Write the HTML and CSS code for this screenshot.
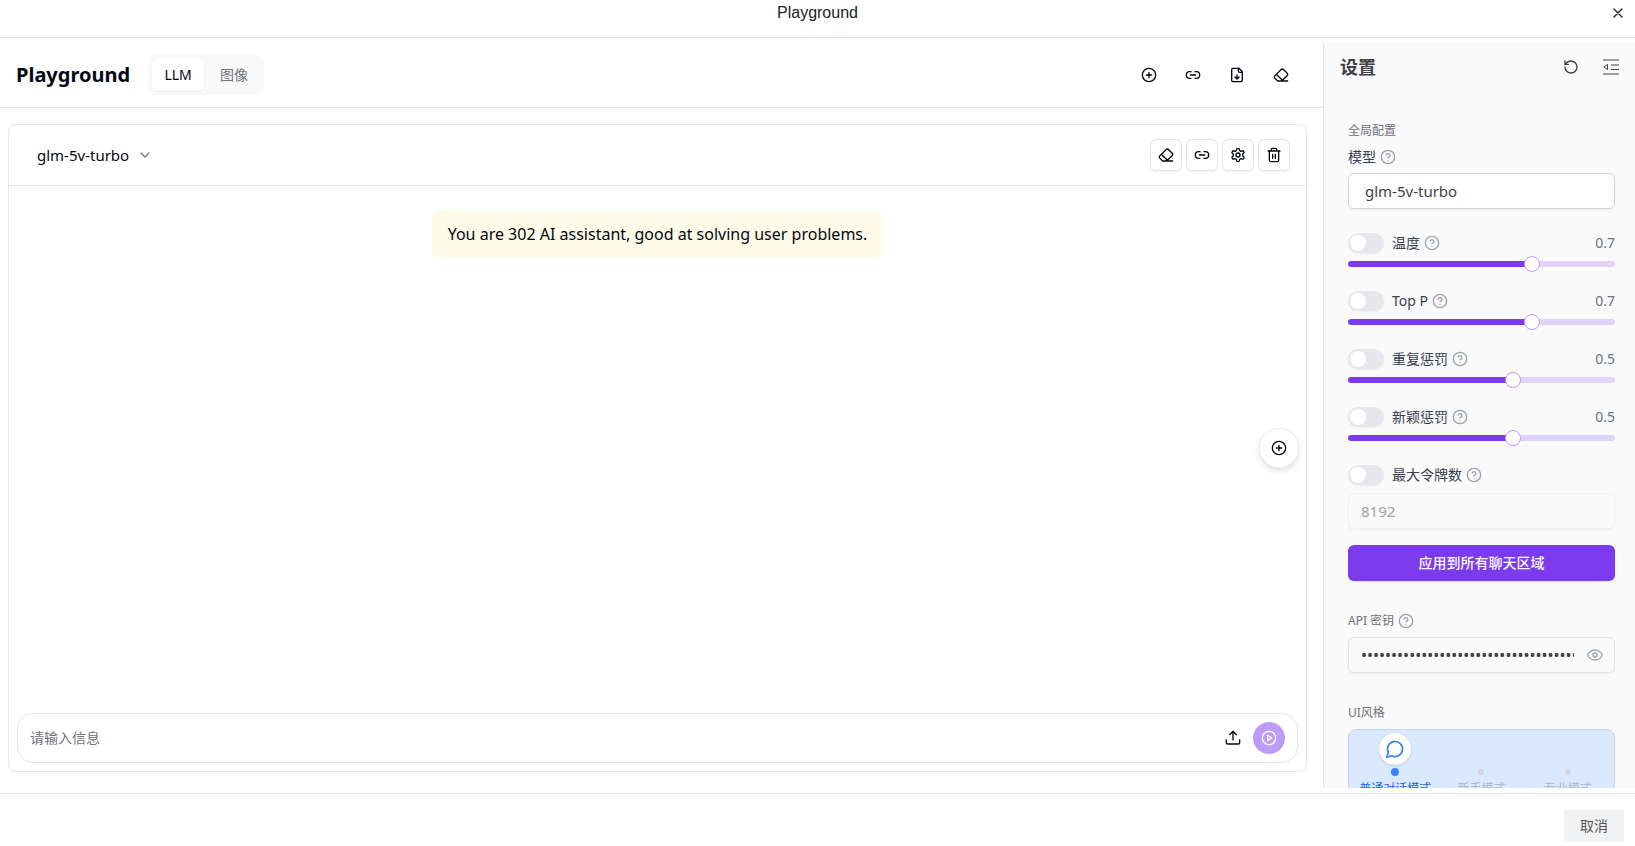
FILE: index.html
```
<!DOCTYPE html>
<html lang="zh-CN">
<head>
    <meta charset="UTF-8">
    <meta name="viewport" content="width=device-width, initial-scale=1.0">
    <title>Playground</title>
    <link rel="stylesheet" href="styles.css">
</head>
<body>
    <!-- shared icons -->
    <svg class="sprite" aria-hidden="true">
        <symbol id="plus" viewBox="0 0 24 24"><circle cx="12" cy="12" r="10"/><path d="M8 12h8M12 8v8"/></symbol>
        <symbol id="link" viewBox="0 0 24 24"><path d="M9 17H7A5 5 0 0 1 7 7h2M15 7h2a5 5 0 1 1 0 10h-2M8 12h8"/></symbol>
        <symbol id="file" viewBox="0 0 24 24"><path d="M15 2H6a2 2 0 0 0-2 2v16a2 2 0 0 0 2 2h12a2 2 0 0 0 2-2V7Z"/><path d="M14 2v4a2 2 0 0 0 2 2h4M12 18v-6M9 15l3 3 3-3"/></symbol>
        <symbol id="eraser" viewBox="0 0 24 24"><path d="m7 21-4.3-4.3c-1-1-1-2.5 0-3.4l9.6-9.6c1-1 2.5-1 3.4 0l5.6 5.6c1 1 1 2.5 0 3.4L13 21M22 21H7M5 11l9 9"/></symbol>
        <symbol id="gear" viewBox="0 0 24 24"><path d="M12.22 2h-.44a2 2 0 0 0-2 2v.18a2 2 0 0 1-1 1.73l-.43.25a2 2 0 0 1-2 0l-.15-.08a2 2 0 0 0-2.73.73l-.22.38a2 2 0 0 0 .73 2.73l.15.1a2 2 0 0 1 1 1.72v.51a2 2 0 0 1-1 1.74l-.15.09a2 2 0 0 0-.73 2.73l.22.38a2 2 0 0 0 2.73.73l.15-.08a2 2 0 0 1 2 0l.43.25a2 2 0 0 1 1 1.73V20a2 2 0 0 0 2 2h.44a2 2 0 0 0 2-2v-.18a2 2 0 0 1 1-1.73l.43-.25a2 2 0 0 1 2 0l.15.08a2 2 0 0 0 2.73-.73l.22-.39a2 2 0 0 0-.73-2.73l-.15-.08a2 2 0 0 1-1-1.74v-.5a2 2 0 0 1 1-1.74l.15-.09a2 2 0 0 0 .73-2.73l-.22-.38a2 2 0 0 0-2.73-.73l-.15.08a2 2 0 0 1-2 0l-.43-.25a2 2 0 0 1-1-1.73V4a2 2 0 0 0-2-2z"/><circle cx="12" cy="12" r="3"/></symbol>
        <symbol id="trash" viewBox="0 0 24 24"><path d="M3 6h18M19 6v14c0 1-1 2-2 2H7c-1 0-2-1-2-2V6M8 6V4c0-1 1-2 2-2h4c1 0 2 1 2 2v2M10 11v6M14 11v6"/></symbol>
        <symbol id="help" viewBox="0 0 24 24"><circle cx="12" cy="12" r="10"/><path d="M9.09 9a3 3 0 0 1 5.83 1c0 2-3 3-3 3M12 17h.01"/></symbol>
        <symbol id="reset" viewBox="0 0 24 24"><path d="M3 12a9 9 0 1 0 9-9 9.75 9.75 0 0 0-6.74 2.74L3 8"/><path d="M3 3v5h5"/></symbol>
        <symbol id="upload" viewBox="0 0 24 24"><path d="M2 15v4a2 2 0 0 0 2 2h16a2 2 0 0 0 2-2v-4M17 7l-5-5-5 5M12 2v13"/></symbol>
        <symbol id="play" viewBox="0 0 24 24"><circle cx="12" cy="12" r="10"/><path d="m10 8 6 4-6 4z"/></symbol>
        <symbol id="eye" viewBox="0 0 24 24"><path d="M1 12s3-7.500 11-7.500S23 12 23 12s-3 7.500-11 7.500S1 12 1 12z"/><circle cx="12" cy="12" r="3"/></symbol>
        <symbol id="chat" viewBox="0 0 24 24"><path d="M7.900 20A9 9 0 1 0 4 16.100L2 22Z"/></symbol>
    </svg>

    <header class="modal-header">
        <span class="modal-title">Playground</span>
        <button class="close" aria-label="Close"><svg viewBox="0 0 10 10"><path d="m1 1 8 8M9 1 1 9"/></svg></button>
    </header>

    <div class="modal-body">
        <main class="main">
            <div class="topbar">
                <h1>Playground</h1>
                <div class="tabs" role="tablist">
                    <button class="tab active" role="tab" aria-selected="true">LLM</button>
                    <button class="tab" role="tab" aria-selected="false">图像</button>
                </div>
                <div class="topbar-actions">
                    <button class="icon-btn" aria-label="添加"><svg class="icon"><use href="#plus"/></svg></button>
                    <button class="icon-btn" aria-label="同步"><svg class="icon"><use href="#link"/></svg></button>
                    <button class="icon-btn" aria-label="导出"><svg class="icon"><use href="#file"/></svg></button>
                    <button class="icon-btn" aria-label="清空"><svg class="icon"><use href="#eraser"/></svg></button>
                </div>
            </div>

            <section class="panel">
                <div class="panel-header">
                    <div class="model-picker">
                        <select aria-label="模型">
                            <option>glm-5v-turbo</option>
                        </select>
                        <svg class="chevron" viewBox="0 0 10 6"><path d="m1 1 4 4 4-4"/></svg>
                    </div>
                    <div class="panel-actions">
                        <button class="box-btn" aria-label="清空"><svg class="icon"><use href="#eraser"/></svg></button>
                        <button class="box-btn" aria-label="同步"><svg class="icon"><use href="#link"/></svg></button>
                        <button class="box-btn" aria-label="设置"><svg class="icon"><use href="#gear"/></svg></button>
                        <button class="box-btn" aria-label="删除"><svg class="icon"><use href="#trash"/></svg></button>
                    </div>
                </div>
                <div class="messages">
                    <p class="bubble">You are 302 AI assistant, good at solving user problems.</p>
                </div>
                <form class="composer">
                    <input type="text" placeholder="请输入信息" aria-label="请输入信息">
                    <button type="button" class="upload" aria-label="上传"><svg class="icon"><use href="#upload"/></svg></button>
                    <button type="button" class="send" aria-label="发送"><svg class="icon"><use href="#play"/></svg></button>
                </form>
                <button class="float-btn" aria-label="添加"><svg class="icon"><use href="#plus"/></svg></button>
            </section>
        </main>

        <aside class="sidebar">
            <div class="sidebar-header">
                <h2>设置</h2>
                <button class="plain-btn" aria-label="重置"><svg class="icon"><use href="#reset"/></svg></button>
                <button class="plain-btn" aria-label="收起"><svg class="fold" viewBox="0 0 16 16"><path d="M0 1h16M8 6h8M8 10.500h8M0 15h16M4.500 5.500v5L.8 8z"/></svg></button>
            </div>

            <div class="settings">
                <h3>全局配置</h3>
                <div class="label-row field-label">
                    <label for="model">模型</label>
                    <svg class="icon help"><use href="#help"/></svg>
                </div>
                <select id="model" class="field model">
                    <option>glm-5v-turbo</option>
                </select>

                <div class="param">
                    <div class="label-row">
                        <input type="checkbox" class="switch" id="temperature">
                        <label for="temperature">温度</label>
                        <svg class="icon help"><use href="#help"/></svg>
                        <output>0.7</output>
                    </div>
                    <input type="range" min="0" max="1" step="0.1" value="0.7" aria-label="温度" style="--fill: 70%">
                </div>
                <div class="param">
                    <div class="label-row">
                        <input type="checkbox" class="switch" id="top-p">
                        <label for="top-p">Top P</label>
                        <svg class="icon help"><use href="#help"/></svg>
                        <output>0.7</output>
                    </div>
                    <input type="range" min="0" max="1" step="0.1" value="0.7" aria-label="Top P" style="--fill: 70%">
                </div>
                <div class="param">
                    <div class="label-row">
                        <input type="checkbox" class="switch" id="frequency">
                        <label for="frequency">重复惩罚</label>
                        <svg class="icon help"><use href="#help"/></svg>
                        <output>0.5</output>
                    </div>
                    <input type="range" min="-2" max="2" step="0.1" value="0.5" aria-label="重复惩罚" style="--fill: 62.5%">
                </div>
                <div class="param">
                    <div class="label-row">
                        <input type="checkbox" class="switch" id="presence">
                        <label for="presence">新颖惩罚</label>
                        <svg class="icon help"><use href="#help"/></svg>
                        <output>0.5</output>
                    </div>
                    <input type="range" min="-2" max="2" step="0.1" value="0.5" aria-label="新颖惩罚" style="--fill: 62.5%">
                </div>

                <div class="label-row">
                    <input type="checkbox" class="switch" id="max-tokens">
                    <label for="max-tokens">最大令牌数</label>
                    <svg class="icon help"><use href="#help"/></svg>
                </div>
                <input type="text" class="field tokens" value="8192" aria-label="最大令牌数" disabled>
                <button class="apply">应用到所有聊天区域</button>

                <div class="label-row small-label">
                    <label for="api-key">API 密钥</label>
                    <svg class="icon help"><use href="#help"/></svg>
                </div>
                <div class="field key">
                    <input type="password" id="api-key" value="sk-0000000000000000000000000000000000000000000000000">
                    <button class="plain-btn" aria-label="显示"><svg class="icon help"><use href="#eye"/></svg></button>
                </div>

                <h3 class="style-title">UI风格</h3>
                <div class="modes">
                    <label class="mode">
                        <span class="mode-icon"><svg class="icon"><use href="#chat"/></svg></span>
                        <input type="radio" name="mode" checked>
                        <span>普通对话模式</span>
                    </label>
                    <label class="mode">
                        <input type="radio" name="mode">
                        <span>新手模式</span>
                    </label>
                    <label class="mode">
                        <input type="radio" name="mode">
                        <span>专业模式</span>
                    </label>
                </div>
            </div>
        </aside>
    </div>

    <footer class="modal-footer">
        <button class="cancel">取消</button>
    </footer>
</body>
</html>
```
FILE: styles.css
```
* {
    box-sizing: border-box;
}
body {
    display: flex;
    flex-direction: column;
    height: 100vh;
    margin: 0;
    overflow: hidden;
    font-family: "Noto Sans", "Noto Sans CJK SC", sans-serif;
    font-size: 14px;
    line-height: 20px;
    color: #030712;
    background-color: #ffffff;
}
h1, h2, h3, p {
    margin: 0;
}
button, input, select {
    margin: 0;
    padding: 0;
    border: none;
    background: none;
    font: inherit;
    color: inherit;
}
button {
    display: flex;
    align-items: center;
    justify-content: center;
    cursor: pointer;
}
select {
    appearance: none;
    font-size: 15px;
}
input:focus, select:focus {
    outline: none;
}
svg {
    display: block;
    flex-shrink: 0;
    fill: none;
    stroke: currentColor;
    stroke-width: 2;
    stroke-linecap: round;
    stroke-linejoin: round;
}
.sprite {
    position: absolute;
    width: 0;
    height: 0;
}
.icon {
    width: 16px;
    height: 16px;
}

/* modal frame */
.modal-header {
    display: grid;
    grid-template-columns: 1fr auto 1fr;
    height: 38px;
    padding: 3px 12px 0;
    border-bottom: 1px solid #e5e5e5;
}
.modal-title {
    grid-column: 2;
    font-family: "Liberation Sans", Arial, sans-serif;
    font-size: 16px;
    color: #222222;
}
.close {
    justify-self: end;
    width: 10px;
    height: 20px;
    color: #222222;
}
.close svg {
    width: 10px;
    height: 10px;
    stroke-width: 1.4;
}
.modal-body {
    display: flex;
    flex: 1;
    min-height: 0;
    padding: 5px 0;
}
.modal-footer {
    display: flex;
    justify-content: flex-end;
    padding: 16px 11px 4px;
    border-top: 1px solid #e5e5e5;
}
.cancel {
    width: 60px;
    height: 32px;
    border-radius: 2px;
    background-color: #f1f2f4;
    color: #555555;
}

/* chat area */
.main {
    display: flex;
    flex-direction: column;
    flex: 1;
    min-width: 0;
}
.topbar {
    display: flex;
    align-items: center;
    height: 65px;
    padding: 0 24px 0 16px;
    border-bottom: 1px solid #e5e5e8;
}
h1 {
    font-size: 20px;
    line-height: 28px;
    font-weight: 700;
}
.tabs {
    display: flex;
    gap: 4px;
    margin-left: 18px;
    padding: 4px;
    border-radius: 8px;
    background-color: #f9f9f9;
}
.tab {
    min-width: 52px;
    height: 32px;
    border-radius: 6px;
    color: #71717a;
}
.tab.active {
    background-color: #ffffff;
    color: #030712;
    box-shadow: 0 1px 2px rgba(0, 0, 0, 0.06);
}
.topbar-actions {
    display: flex;
    gap: 8px;
    margin-left: auto;
}
.icon-btn {
    width: 36px;
    height: 36px;
}
.panel {
    position: relative;
    display: flex;
    flex-direction: column;
    flex: 1;
    min-height: 0;
    margin: 16px 16px 16px 8px;
    border: 1px solid #e5e5e8;
    border-radius: 8px;
}
.panel-header {
    display: flex;
    align-items: center;
    justify-content: space-between;
    height: 61px;
    padding: 0 16px 0 28px;
    border-bottom: 1px solid #e5e5e8;
}
.model-picker {
    display: flex;
    align-items: center;
    gap: 10px;
}
.chevron {
    width: 10px;
    height: 6px;
    color: #777777;
    stroke-width: 1.3;
}
.panel-actions {
    display: flex;
    gap: 4px;
}
.box-btn {
    width: 32px;
    height: 32px;
    border: 1px solid #e5e5e8;
    border-radius: 6px;
    box-shadow: 0 1px 2px rgba(0, 0, 0, 0.06);
}
.messages {
    flex: 1;
    padding: 24px 8px;
}
.bubble {
    width: fit-content;
    margin: 0 auto;
    padding: 12px 16px;
    border-radius: 8px;
    background-color: #fefbe8;
    font-size: 16px;
    line-height: 24px;
}
.composer {
    display: flex;
    align-items: center;
    height: 50px;
    margin: 0 8px 8px;
    padding: 0 12px;
    border: 1px solid #e5e5e8;
    border-radius: 16px;
}
.composer input {
    flex: 1;
    min-width: 0;
}
.composer input::placeholder {
    color: #71717a;
}
.send {
    width: 32px;
    height: 32px;
    margin-left: 12px;
    border-radius: 50%;
    background-color: #bd9cf5;
    color: #ffffff;
}
.float-btn {
    position: absolute;
    top: calc(50% - 20px);
    right: 7px;
    width: 40px;
    height: 40px;
    border: 1px solid #ededf0;
    border-radius: 50%;
    background-color: #ffffff;
    box-shadow: 0 3px 6px rgba(0, 0, 0, 0.12);
}

/* settings */
.sidebar {
    width: 312px;
    overflow: hidden;
    border-left: 1px solid #e5e5e8;
    background-color: #fafafa;
    color: #3f3f46;
}
.sidebar-header {
    display: flex;
    align-items: center;
    gap: 24px;
    height: 48px;
    padding: 0 16px;
}
h2 {
    flex: 1;
    font-size: 18px;
    line-height: 28px;
}
.fold {
    width: 16px;
    height: 16px;
    stroke-width: 1;
    stroke-linecap: butt;
}
.settings {
    display: flex;
    flex-direction: column;
    padding: 32px 20px 0 24px;
}
h3 {
    font-size: 12px;
    line-height: 16px;
    font-weight: 400;
    color: #71717a;
}
.label-row {
    display: flex;
    align-items: center;
    height: 20px;
    color: #374151;
}
.field-label {
    margin-top: 8px;
}
.help {
    margin-left: 4px;
    color: #9ca3af;
}
.field {
    height: 36px;
    border: 1px solid #e2e2e8;
    border-radius: 6px;
    box-shadow: 0 1px 2px rgba(0, 0, 0, 0.05);
}
.model {
    margin: 6px 0 24px;
    padding: 0 16px;
    border-color: #d1d5db;
    background-color: #ffffff;
}
.param {
    margin-bottom: 19px;
}
.switch {
    appearance: none;
    width: 36px;
    height: 20px;
    margin-right: 8px;
    padding: 2px;
    border-radius: 10px;
    background-color: #e5e7eb;
    box-shadow: 0 1px 2px rgba(0, 0, 0, 0.06);
}
.switch::before {
    content: "";
    display: block;
    width: 16px;
    height: 16px;
    border-radius: 50%;
    background-color: #ffffff;
}
.switch:checked {
    background-color: #7c3aed;
}
.switch:checked::before {
    margin-left: 16px;
}
output {
    margin-left: auto;
    color: #6b7280;
}
input[type="range"] {
    appearance: none;
    display: block;
    width: 100%;
    height: 16px;
    margin-top: 3px;
}
input[type="range"]::-webkit-slider-runnable-track {
    height: 6px;
    border-radius: 3px;
    background: linear-gradient(to right, #7c3aed var(--fill), #e1d3f8 var(--fill));
}
input[type="range"]::-webkit-slider-thumb {
    appearance: none;
    width: 16px;
    height: 16px;
    margin-top: -5px;
    border: 1px solid #bd9cf5;
    border-radius: 50%;
    background-color: #ffffff;
}
.tokens {
    margin-top: 8px;
    padding: 0 12px;
    border-color: #f1f1f3;
    font-size: 15px;
    color: #a1a1a6;
}
.apply {
    height: 36px;
    margin-top: 16px;
    border-radius: 6px;
    background-color: #7c3aed;
    color: #fafafa;
    font-weight: 500;
    box-shadow: 0 1px 2px rgba(0, 0, 0, 0.1);
}
.small-label {
    height: 16px;
    margin: 32px 0 8px;
    font-size: 12px;
    color: #71717a;
}
.key {
    display: flex;
    align-items: center;
    padding: 0 11px 0 12px;
}
.key input {
    flex: 1;
    min-width: 0;
    margin-right: 9px;
    font-size: 16px;
}
.style-title {
    margin: 32px 0 8px;
}
.modes {
    display: grid;
    grid-template-columns: repeat(3, 1fr);
    padding: 3px;
    border: 1px solid #c5d3e8;
    border-radius: 8px;
    background-color: #dbe9fe;
}
.mode {
    display: flex;
    flex-direction: column;
    align-items: center;
    justify-content: flex-end;
    gap: 3px;
    font-size: 12px;
    line-height: 20px;
    color: #aeb6c4;
}
.mode:has(:checked) {
    color: #2563eb;
}
.mode-icon {
    display: grid;
    place-items: center;
    width: 32px;
    height: 32px;
    border-radius: 50%;
    background-color: #ffffff;
    color: #3b82f6;
    box-shadow: 0 1px 3px rgba(0, 0, 0, 0.15);
}
.mode-icon .icon {
    width: 20px;
    height: 20px;
}
.mode input {
    appearance: none;
    width: 6px;
    height: 6px;
    margin: 1px;
    border-radius: 50%;
    background-color: #d1d5db;
}
.mode input:checked {
    width: 8px;
    height: 8px;
    margin: 0;
    background-color: #3b82f6;
}
```
